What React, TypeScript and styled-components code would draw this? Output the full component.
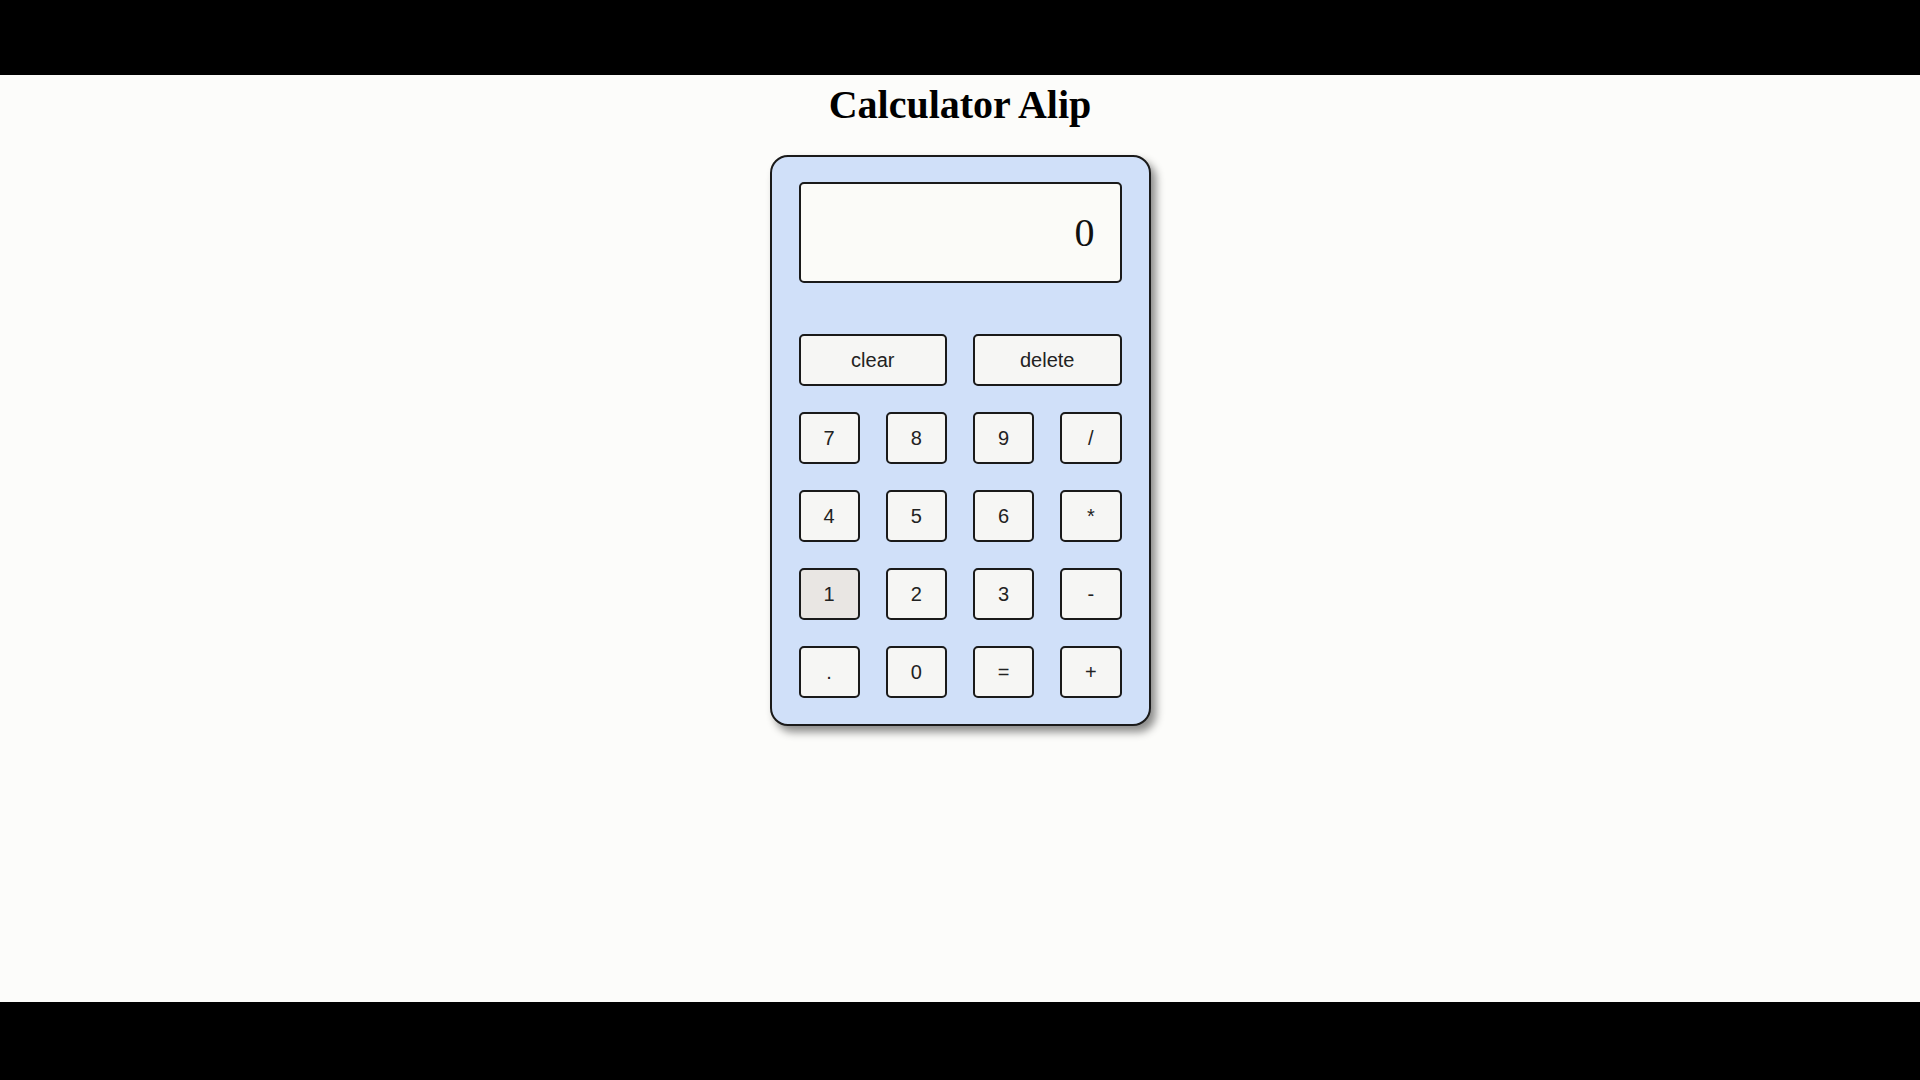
import React from 'react'
import styled, { createGlobalStyle } from 'styled-components'

const GlobalStyle = createGlobalStyle`
  html, body {
    margin: 0;
    padding: 0;
    background: #fcfcfa;
  }
`

const Page = styled.div`
  display: flex;
  flex-direction: column;
  width: 1920px;
  height: 1080px;
`

const Band = styled.div<{ $h: number }>`
  height: ${p => p.$h}px;
  flex: none;
  background: #000;
`

const Main = styled.main`
  flex: 1;
  display: flex;
  flex-direction: column;
  align-items: center;
  background: #fcfcfa;
`

const Title = styled.h1`
  margin: 8px 0 28px;
  font-family: "Liberation Serif", "Times New Roman", serif;
  font-size: 40px;
  line-height: 44px;
  font-weight: bold;
  color: #000;
`

const Calculator = styled.div`
  box-sizing: border-box;
  width: 381px;
  height: 571px;
  padding: 25px 27px 26px 27px;
  background: #d0e0f9;
  border: 2px solid #1a1a1a;
  border-radius: 18px;
  box-shadow: 5px 6px 9px rgba(0, 0, 0, 0.45);
`

const Display = styled.div`
  box-sizing: border-box;
  height: 101px;
  margin-bottom: 51px;
  padding-right: 25px;
  display: flex;
  align-items: center;
  justify-content: flex-end;
  background: #fbfbf8;
  border: 2px solid #1a1a1a;
  border-radius: 5px;
  font-family: "Liberation Serif", "Times New Roman", serif;
  font-size: 40px;
  color: #111;
`

const Keys = styled.div`
  display: grid;
  grid-template-columns: repeat(4, 1fr);
  grid-auto-rows: 52px;
  gap: 26px;
`

const Key = styled.button<{ $wide?: boolean; $active?: boolean }>`
  box-sizing: border-box;
  grid-column: ${p => (p.$wide ? 'span 2' : 'span 1')};
  margin: 0;
  padding: 0;
  background: ${p => (p.$active ? '#e9e6e3' : '#f6f6f4')};
  border: 2px solid #1a1a1a;
  border-radius: 5px;
  font-family: "Liberation Sans", Arial, sans-serif;
  font-size: 20px;
  color: #222;
  cursor: pointer;
`

const rows = ['7', '8', '9', '/', '4', '5', '6', '*', '1', '2', '3', '-', '.', '0', '=', '+']

export default function App() {
  return (
    <Page>
      <GlobalStyle />
      <Band $h={75} />
      <Main>
        <Title>Calculator Alip</Title>
        <Calculator>
          <Display>0</Display>
          <Keys>
            <Key $wide>clear</Key>
            <Key $wide>delete</Key>
            {rows.map(k => (
              <Key key={k} $active={k === '1'}>
                {k}
              </Key>
            ))}
          </Keys>
        </Calculator>
      </Main>
      <Band $h={78} />
    </Page>
  )
}
